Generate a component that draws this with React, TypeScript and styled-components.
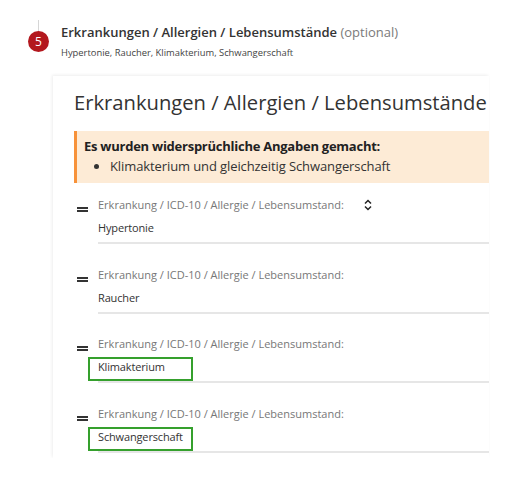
import styled, { createGlobalStyle } from 'styled-components'

const entries = [
  { value: 'Hypertonie', sortable: true, conflict: false },
  { value: 'Raucher', sortable: false, conflict: false },
  { value: 'Klimakterium', sortable: false, conflict: true },
  { value: 'Schwangerschaft', sortable: false, conflict: true },
]

export default function App() {
  return (
    <>
      <GlobalStyle />
      <Page>
        <StepHeader>
          <StepMarker>
            <StepLine />
            <StepBadge>5</StepBadge>
          </StepMarker>
          <StepText>
            <StepTitle>
              Erkrankungen / Allergien / Lebensumstände <Optional>(optional)</Optional>
            </StepTitle>
            <StepSummary>Hypertonie, Raucher, Klimakterium, Schwangerschaft</StepSummary>
          </StepText>
        </StepHeader>

        <Panel>
          <PanelTitle>Erkrankungen / Allergien / Lebensumstände</PanelTitle>
          <Warning>
            <WarningTitle>Es wurden widersprüchliche Angaben gemacht:</WarningTitle>
            <WarningList>
              <li>Klimakterium und gleichzeitig Schwangerschaft</li>
            </WarningList>
          </Warning>

          {entries.map((entry) => (
            <Entry key={entry.value}>
              <DragHandle>
                <span />
                <span />
              </DragHandle>
              <Field>
                <LabelRow>
                  <Label>Erkrankung / ICD-10 / Allergie / Lebensumstand:</Label>
                  {entry.sortable && <SortIcon />}
                </LabelRow>
                <Value $conflict={entry.conflict}>{entry.value}</Value>
              </Field>
            </Entry>
          ))}
        </Panel>
      </Page>
    </>
  )
}

function SortIcon() {
  return (
    <SortSvg width="8" height="12" viewBox="0 0 8 12">
      <path d="M1 4.5 L4 1.5 L7 4.5" />
      <path d="M1 7.5 L4 10.5 L7 7.5" />
    </SortSvg>
  )
}

const GlobalStyle = createGlobalStyle`
  body {
    margin: 0;
    background: #fff;
    font-family: "Open Sans", "Noto Sans", sans-serif;
    color: #333;
  }
`

const Page = styled.div`
  display: flex;
  flex-direction: column;
  padding-top: 20px;
`

const StepHeader = styled.div`
  display: flex;
  padding-left: 28px;
`

const StepMarker = styled.div`
  display: flex;
  flex-direction: column;
  align-items: center;
  width: 21px;
`

const StepLine = styled.div`
  width: 1px;
  height: 11px;
  background: #d6d6d6;
`

const StepBadge = styled.div`
  width: 21px;
  height: 21px;
  border-radius: 50%;
  background: #b3181e;
  color: #fff;
  font-size: 12px;
  line-height: 21px;
  text-align: center;
`

const StepText = styled.div`
  margin-left: 12px;
  padding-top: 3px;
`

const StepTitle = styled.div`
  font-size: 13px;
  font-weight: 600;
  line-height: 18px;
  color: #333;
`

const Optional = styled.span`
  font-weight: 400;
  color: #7a7a7a;
`

const StepSummary = styled.div`
  margin-top: 5px;
  font-size: 9.4px;
  line-height: 14px;
  color: #444;
`

const Panel = styled.div`
  margin: 16px 30px 0 53px;
  padding: 12px 0 5px 21px;
  background: #fff;
  box-shadow: -1px -1px 3px rgba(0, 0, 0, 0.07);
`

const PanelTitle = styled.h1`
  margin: 0;
  font-size: 20.2px;
  font-weight: 400;
  line-height: 28px;
  color: #333;
`

const Warning = styled.div`
  margin-top: 15px;
  padding: 5px 10px 7px 7px;
  background: #fdebd6;
  border-left: 3px solid #f7923a;
`

const WarningTitle = styled.div`
  font-size: 13px;
  font-weight: 700;
  letter-spacing: -0.25px;
  line-height: 20px;
  color: #222;
`

const WarningList = styled.ul`
  margin: 0;
  padding-left: 26px;
  font-size: 13px;
  letter-spacing: -0.1px;
  line-height: 20px;
  color: #333;
`

const Entry = styled.div`
  display: flex;
  padding-left: 3px;
  margin-top: 14px;

  & + & {
    margin-top: 22.5px;
  }
`

const DragHandle = styled.div`
  display: flex;
  flex-direction: column;
  gap: 1px;
  width: 21px;
  padding-top: 10px;

  span {
    width: 11px;
    height: 2px;
    background: #333;
  }
`

const Field = styled.div`
  flex: 1;
  border-bottom: 2px solid #e6e6e6;
`

const LabelRow = styled.div`
  display: flex;
  align-items: center;
  height: 16px;
  margin-bottom: 5px;
`

const Label = styled.span`
  font-size: 11px;
  line-height: 16px;
  color: #777;
`

const SortSvg = styled.svg`
  margin-left: 20px;
  fill: none;
  stroke: #222;
  stroke-width: 1.5;
`

const Value = styled.div<{ $conflict: boolean }>`
  width: 105px;
  box-sizing: border-box;
  margin-left: -10px;
  padding: 0 0 4px 8px;
  border: 2px solid ${(p) => (p.$conflict ? '#35a02d' : 'transparent')};
  font-size: 11px;
  letter-spacing: -0.15px;
  line-height: 16px;
  color: #333;
  white-space: nowrap;
`
